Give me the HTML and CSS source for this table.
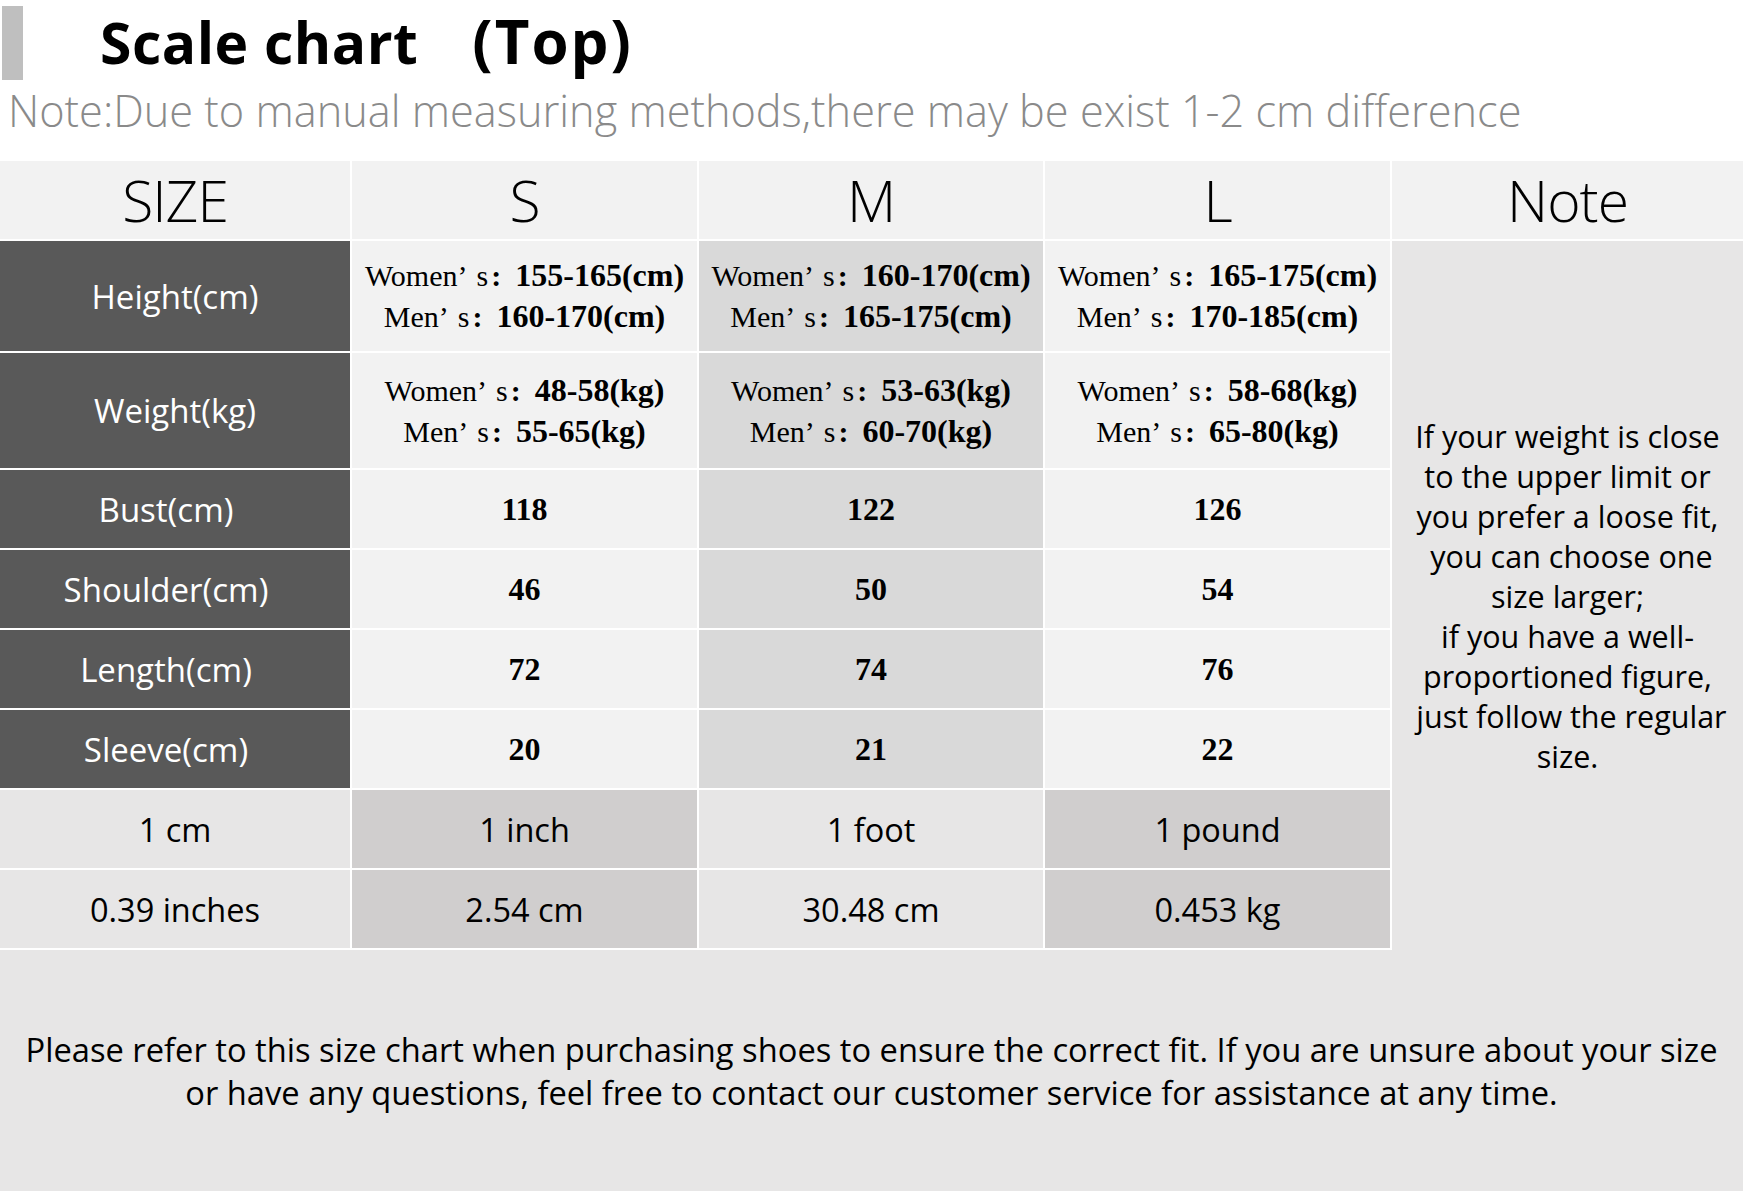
FILE: index.html
```html
<!DOCTYPE html>
<html lang="en">
<head>
<meta charset="utf-8">
<title>Scale chart (Top)</title>
<link rel="stylesheet" href="styles.css">
</head>
<body>
<header class="top">
  <div class="bar"></div>
  <h1 class="title">Scale chart<span class="gap"></span><span class="paren">(Top)</span></h1>
</header>
<p class="subnote">Note:Due to manual measuring methods,there may be exist 1-2 cm difference</p>

<div class="chart">
  <div class="cell head">SIZE</div>
  <div class="cell head">S</div>
  <div class="cell head">M</div>
  <div class="cell head">L</div>
  <div class="cell head last">Note</div>

  <div class="cell lab">Height(cm)</div>
  <div class="cell val lt"><div><span class="k">Women<span class="ap">’</span>s<span class="co">:</span></span><b>155-165(cm)</b></div><div><span class="k">Men<span class="ap">’</span>s<span class="co">:</span></span><b>160-170(cm)</b></div></div>
  <div class="cell val dk"><div><span class="k">Women<span class="ap">’</span>s<span class="co">:</span></span><b>160-170(cm)</b></div><div><span class="k">Men<span class="ap">’</span>s<span class="co">:</span></span><b>165-175(cm)</b></div></div>
  <div class="cell val lt"><div><span class="k">Women<span class="ap">’</span>s<span class="co">:</span></span><b>165-175(cm)</b></div><div><span class="k">Men<span class="ap">’</span>s<span class="co">:</span></span><b>170-185(cm)</b></div></div>

  <div class="cell note-col">If your weight is close<br>to the upper limit or<br>you prefer a loose fit,<br>&nbsp;you can choose one<br>size larger;<br>if you have a well-<br>proportioned figure,<br>&nbsp;just follow the regular<br>size.</div>

  <div class="cell lab">Weight(kg)</div>
  <div class="cell val lt"><div><span class="k">Women<span class="ap">’</span>s<span class="co">:</span></span><b>48-58(kg)</b></div><div><span class="k">Men<span class="ap">’</span>s<span class="co">:</span></span><b>55-65(kg)</b></div></div>
  <div class="cell val dk"><div><span class="k">Women<span class="ap">’</span>s<span class="co">:</span></span><b>53-63(kg)</b></div><div><span class="k">Men<span class="ap">’</span>s<span class="co">:</span></span><b>60-70(kg)</b></div></div>
  <div class="cell val lt"><div><span class="k">Women<span class="ap">’</span>s<span class="co">:</span></span><b>58-68(kg)</b></div><div><span class="k">Men<span class="ap">’</span>s<span class="co">:</span></span><b>65-80(kg)</b></div></div>

  <div class="cell lab short">Bust(cm)</div>
  <div class="cell num lt">118</div>
  <div class="cell num dk">122</div>
  <div class="cell num lt">126</div>

  <div class="cell lab short">Shoulder(cm)</div>
  <div class="cell num lt">46</div>
  <div class="cell num dk">50</div>
  <div class="cell num lt">54</div>

  <div class="cell lab short">Length(cm)</div>
  <div class="cell num lt">72</div>
  <div class="cell num dk">74</div>
  <div class="cell num lt">76</div>

  <div class="cell lab short">Sleeve(cm)</div>
  <div class="cell num lt">20</div>
  <div class="cell num dk">21</div>
  <div class="cell num lt">22</div>

  <div class="cell conv c1">1 cm</div>
  <div class="cell conv c2">1 inch</div>
  <div class="cell conv c1">1 foot</div>
  <div class="cell conv c2">1 pound</div>

  <div class="cell conv c1">0.39 inches</div>
  <div class="cell conv c2">2.54 cm</div>
  <div class="cell conv c1">30.48 cm</div>
  <div class="cell conv c2">0.453 kg</div>
</div>

<div class="footer-note">Please refer to this size chart when purchasing shoes to ensure the correct fit. If you are unsure about your size<br>or have any questions, feel free to contact our customer service for assistance at any time.</div>
</body>
</html>
```

FILE: styles.css
```css
html, body {
  margin: 0;
  padding: 0;
  background: #ffffff;
}

body {
  width: 1743px;
  height: 1191px;
  overflow: hidden;
  font-family: "Open Sans", "Noto Sans", "Liberation Sans", sans-serif;
  color: #000;
}

.top {
  display: flex;
  align-items: flex-start;
  height: 86px;
}

.bar {
  width: 21px;
  height: 74px;
  margin: 6px 0 0 2px;
  background: #bfbfbf;
}

.title {
  margin: 13px 0 0 77px;
  font-size: 57px;
  line-height: 56px;
  font-weight: 700;
  white-space: nowrap;
  letter-spacing: 0.5px;
}

.title .gap {
  display: inline-block;
  width: 54px;
}

.title .paren {
  font-size: 60px;
  letter-spacing: 2px;
}

.subnote {
  margin: 0 0 25px 0;
  padding-left: 8px;
  height: 50px;
  font-size: 43.3px;
  line-height: 50px;
  font-weight: 300;
  color: #8a8a8a;
  white-space: nowrap;
}

.chart {
  display: grid;
  grid-template-columns: 352px 347px 346px 347px 1fr;
  grid-template-rows: 80px 112px 117px repeat(6, 80px);
}

.cell {
  box-sizing: border-box;
  border-right: 2px solid #fff;
  border-bottom: 2px solid #fff;
  display: flex;
  flex-direction: column;
  align-items: center;
  justify-content: center;
  text-align: center;
}

.head {
  background: #f2f2f2;
  font-size: 57px;
  font-weight: 300;
  letter-spacing: -1px;
}

.head.last {
  border-right: 0;
}

.lab {
  background: #595959;
  color: #fff;
  font-size: 33px;
}

.lab.short {
  padding-right: 18px;
}

.lt { background: #f2f2f2; }
.dk { background: #d9d9d9; }

.val {
  font-family: "Liberation Serif", serif;
  font-size: 30px;
  line-height: 41px;
  white-space: nowrap;
}

.val b {
  font-size: 32px;
  font-weight: 700;
}

.val .ap {
  margin-right: 9px;
}

.val .co {
  margin: 0 14px 0 3px;
  font-weight: 700;
}

.num {
  font-family: "Liberation Serif", serif;
  font-size: 32px;
  font-weight: 700;
}

.conv {
  font-size: 32.5px;
}

.c1 { background: #e7e6e6; }
.c2 { background: #d0cece; }

.note-col {
  grid-column: 5;
  grid-row: 2 / 10;
  border-right: 0;
  border-bottom: 0;
  background: #e7e6e6;
  font-size: 30.5px;
  line-height: 40px;
  white-space: nowrap;
}

.footer-note {
  height: 241px;
  background: #e7e6e6;
  display: flex;
  align-items: center;
  justify-content: center;
  text-align: center;
  font-size: 32.7px;
  line-height: 43px;
  white-space: nowrap;
}
```
